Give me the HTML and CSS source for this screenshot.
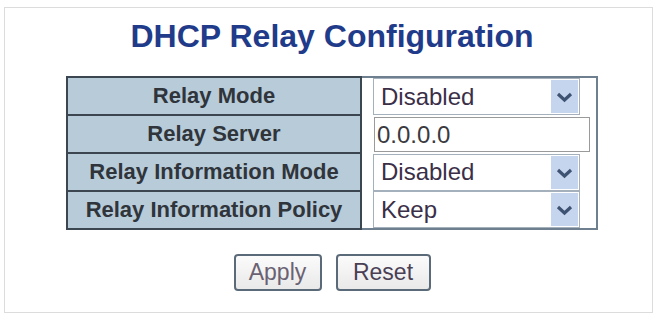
FILE: index.html
```html
<!DOCTYPE html>
<html>
<head>
<meta charset="utf-8">
<link rel="stylesheet" href="styles.css">
</head>
<body>
<div class="frame">
  <h1 class="title">DHCP Relay Configuration</h1>
  <table class="config">
    <tr>
      <td class="label">Relay Mode</td>
      <td class="value">
        <div class="select"><span class="sel-text">Disabled</span><span class="arrow"><svg width="27" height="33" viewBox="0 0 27 33"><path d="M7 14 L13.5 20 L20 14" fill="none" stroke="#3e5272" stroke-width="3.2"/></svg></span></div>
      </td>
    </tr>
    <tr>
      <td class="label">Relay Server</td>
      <td class="value">
        <div class="input">0.0.0.0</div>
      </td>
    </tr>
    <tr>
      <td class="label">Relay Information Mode</td>
      <td class="value">
        <div class="select"><span class="sel-text">Disabled</span><span class="arrow"><svg width="27" height="33" viewBox="0 0 27 33"><path d="M7 14 L13.5 20 L20 14" fill="none" stroke="#3e5272" stroke-width="3.2"/></svg></span></div>
      </td>
    </tr>
    <tr>
      <td class="label">Relay Information Policy</td>
      <td class="value last">
        <div class="select"><span class="sel-text">Keep</span><span class="arrow"><svg width="27" height="33" viewBox="0 0 27 33"><path d="M7 14 L13.5 20 L20 14" fill="none" stroke="#3e5272" stroke-width="3.2"/></svg></span></div>
      </td>
    </tr>
  </table>
  <div class="buttons">
    <button class="btn btn-apply">Apply</button>
    <button class="btn btn-reset">Reset</button>
  </div>
</div>
</body>
</html>
```
FILE: styles.css
```css
html, body {
  margin: 0;
  padding: 0;
  background: #ffffff;
  overflow: hidden;
}
body {
  font-family: "Liberation Sans", Arial, sans-serif;
}
.frame {
  margin: 7px 3px 0 4px;
  height: 306px;
  border: 1px solid #dcdcdc;
  padding-left: 7px;
  box-sizing: border-box;
}
.title {
  margin: 9px 0 0 0;
  font-size: 32px;
  line-height: 38px;
  font-weight: bold;
  color: #1f3b8a;
  text-align: center;
}
.config {
  margin: 21px auto 0 auto;
  border-collapse: collapse;
}
.config td {
  padding: 0;
  height: 36px;
}
.label {
  width: 292px;
  background: #b8cbd9;
  border: 2px solid #3b4651;
  text-align: center;
  font-size: 22px;
  font-weight: bold;
  color: #2f353b;
  white-space: nowrap;
}
.value {
  width: 223px;
  background: #ffffff;
  border-right: 2px solid #6e8090;
  border-top: 2px solid #6e8090;
  border-bottom: none;
  padding-left: 11px !important;
  vertical-align: middle;
}
.config tr + tr .value {
  border-top: none;
}
.value.last {
  border-bottom: 2px solid #6e8090;
}
.select {
  position: relative;
  width: 207px;
  height: 37px;
  box-sizing: border-box;
  border: 1px solid #a4b1bd;
  background: #ffffff;
  display: flex;
  align-items: center;
}
.sel-text {
  padding-left: 7px;
  font-size: 24px;
  color: #3b2f48;
}
.arrow {
  position: absolute;
  right: 1px;
  top: 1px;
  width: 27px;
  height: 33px;
  background: #c6d5ee;
  display: flex;
}
.input {
  width: 216px;
  height: 35px;
  box-sizing: border-box;
  border: 1px solid #9a9a9a;
  font-size: 24px;
  line-height: 33px;
  padding-left: 2px;
  color: #3a3a40;
  margin-left: 1px;
}
.buttons {
  display: flex;
  justify-content: center;
  gap: 14px;
  margin-top: 24px;
}
.btn {
  height: 37px;
  box-sizing: border-box;
  border: 2px solid #5b6a79;
  border-radius: 4px;
  background: linear-gradient(#fbfbfb, #e9e9e9);
  font-family: "Liberation Sans", Arial, sans-serif;
  font-size: 23px;
  padding: 0;
  color: #4a3f55;
}
.btn-apply {
  width: 88px;
  color: #6a6272;
}
.btn-reset {
  width: 95px;
}
```
